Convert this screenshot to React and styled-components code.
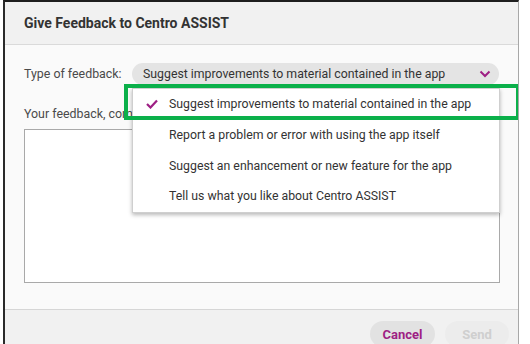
import React from "react";
import styled, { createGlobalStyle } from "styled-components";

const GlobalStyle = createGlobalStyle`
  html, body {
    margin: 0;
    padding: 0;
    background: #ffffff;
    font-family: Roboto, "Liberation Sans", Arial, sans-serif;
  }
`;

const PURPLE = "#9e1f84";

const options = [
  "Suggest improvements to material contained in the app",
  "Report a problem or error with using the app itself",
  "Suggest an enhancement or new feature for the app",
  "Tell us what you like about Centro ASSIST",
];

const Frame = styled.div`
  position: relative;
  margin: 0 0 0 3px;
  width: 516px;
  height: 344px;
  overflow: hidden;
  box-sizing: border-box;
  border-top: 2px solid #1e1e1e;
  border-left: 2px solid #2a2a2a;
  border-right: 1px solid #a8a8a8;
  display: flex;
  flex-direction: column;
`;

const Header = styled.div`
  height: 42px;
  flex: none;
  background: #f1f1f1;
  border-bottom: 1px solid #dadada;
  display: flex;
  align-items: center;
  padding-left: 19px;
`;

const Title = styled.h1`
  margin: 0;
  font-size: 14px;
  font-weight: 700;
  color: #333;
`;

const Body = styled.div`
  height: 264px;
  flex: none;
  box-sizing: border-box;
  background: #fafafa;
  padding: 18px 19px 0 19px;
  display: flex;
  flex-direction: column;
`;

const TypeRow = styled.div`
  display: flex;
  align-items: center;
`;

const Label = styled.span`
  font-size: 12.4px;
  line-height: 16px;
  color: #4a4a4a;
`;

const TypeLabel = styled(Label)`
  width: 108px;
  flex: none;
`;

const SelectWrap = styled.div`
  position: relative;
`;

const Pill = styled.div`
  width: 367px;
  height: 22px;
  box-sizing: border-box;
  border-radius: 11px;
  background: #e4e4e4;
  display: flex;
  align-items: center;
  justify-content: space-between;
  padding: 0 8px 0 11px;
  font-size: 12.3px;
  color: #333;
`;

const Menu = styled.ul`
  position: absolute;
  top: 25px;
  left: 0;
  width: 368px;
  margin: 0;
  padding: 0;
  list-style: none;
  box-sizing: border-box;
  background: #fff;
  border: 1px solid #cfcfcf;
  box-shadow: 0 2px 4px rgba(0, 0, 0, 0.28);
  z-index: 2;
`;

const MenuItem = styled.li`
  height: 30.7px;
  display: flex;
  align-items: center;
  padding-left: 13px;
  font-size: 12.3px;
  color: #333;
`;

const CheckSlot = styled.span`
  width: 23px;
  flex: none;
  display: flex;
  align-items: center;
`;

const FeedbackLabel = styled(Label)`
  margin-top: 21px;
  white-space: nowrap;
`;

const TextArea = styled.div`
  margin-top: 7px;
  width: 476px;
  height: 154px;
  box-sizing: border-box;
  background: #fff;
  border: 1px solid #a9a9a9;
`;

const Footer = styled.div`
  flex: 1;
  background: #f1f1f1;
  border-top: 1px solid #d6d6d6;
  display: flex;
  justify-content: flex-end;
  align-items: flex-start;
  gap: 10px;
  padding: 11px 9px 0 0;
`;

const Button = styled.button`
  width: ${({ $w }) => $w}px;
  height: 26px;
  border: none;
  border-radius: 13px;
  background: ${({ $disabled }) => ($disabled ? "#ececec" : "#e2e2e2")};
  color: ${({ $disabled }) => ($disabled ? "#cfcfcf" : PURPLE)};
  font-family: inherit;
  font-size: 13px;
  font-weight: 700;
  padding: 0;
`;

const Highlight = styled.div`
  position: absolute;
  left: 119px;
  top: 82px;
  width: 396px;
  height: 36px;
  box-sizing: border-box;
  border: 4.5px solid #0bb04a;
  z-index: 3;
  pointer-events: none;
`;

const Chevron = () => (
  <svg width="12" height="8" viewBox="0 0 12 8">
    <path d="M1.5 1.5 L6 6 L10.5 1.5" fill="none" stroke={PURPLE} strokeWidth="2" />
  </svg>
);

const Check = () => (
  <svg width="12" height="10" viewBox="0 0 12 10">
    <path d="M1 5 L4.5 8.5 L11 1.5" fill="none" stroke={PURPLE} strokeWidth="2.2" />
  </svg>
);

const App = () => {
  const selected = 0;
  return (
    <>
      <GlobalStyle />
      <Frame>
        <Header>
          <Title>Give Feedback to Centro ASSIST</Title>
        </Header>
        <Body>
          <TypeRow>
            <TypeLabel>Type of feedback:</TypeLabel>
            <SelectWrap>
              <Pill>
                <span>{options[selected]}</span>
                <Chevron />
              </Pill>
              <Menu>
                {options.map((o, i) => (
                  <MenuItem key={o}>
                    <CheckSlot>{i === selected && <Check />}</CheckSlot>
                    {o}
                  </MenuItem>
                ))}
              </Menu>
            </SelectWrap>
          </TypeRow>
          <FeedbackLabel>Your feedback, comments or suggestions:</FeedbackLabel>
          <TextArea />
        </Body>
        <Footer>
          <Button $w={65}>Cancel</Button>
          <Button $w={64} $disabled>
            Send
          </Button>
        </Footer>
        <Highlight />
      </Frame>
    </>
  );
};

export default App;
